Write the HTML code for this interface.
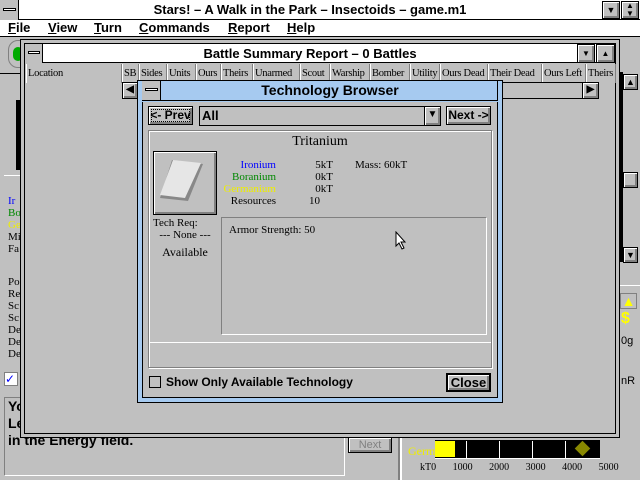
<!DOCTYPE html>
<html><head><style>
*{margin:0;padding:0;box-sizing:border-box}
body{width:640px;height:480px;overflow:hidden;background:#c0c0c0;position:relative;font-family:"Liberation Sans",sans-serif;font-size:13px}
.a{position:absolute;white-space:nowrap}
.btn{position:absolute;background:#c0c0c0;border:1px solid #000;box-shadow:inset 1px 1px 0 #fff,inset -2px -2px 0 #808080;text-align:center;font-weight:bold;white-space:nowrap;overflow:hidden}
.serif{font-family:"Liberation Serif",serif;font-size:12px}
.hd{position:absolute;top:0;height:19px;border-right:1px solid #808080;border-left:1px solid #fff;font-family:"Liberation Serif",serif;font-size:10.5px;letter-spacing:-0.3px;line-height:19px;padding-left:1px;white-space:nowrap;overflow:hidden}
</style></head><body>
<!-- main title -->
<div class="a" style="left:0;top:0;width:640px;height:20px;background:#fff;border-bottom:1px solid #000"></div>
<div class="a" style="left:0;top:0;width:19px;height:20px;background:#c0c0c0;border-right:1px solid #000"><div class="a" style="left:3px;top:8px;width:13px;height:3px;background:#fff;border:1px solid #000"></div></div>
<div class="a" style="left:20px;top:0;width:580px;height:20px;text-align:center;line-height:20px;font-size:13px;font-weight:bold">Stars! – A Walk in the Park – Insectoids – game.m1</div>
<div class="btn" style="left:602px;top:1px;width:18px;height:18px;font-size:9px;line-height:16px">▼</div>
<div class="btn" style="left:621px;top:1px;width:18px;height:18px;font-size:8px;line-height:8px">▲<br>▼</div>
<!-- menu -->
<div class="a" style="left:0;top:20px;width:640px;height:17px;background:#fff;border-bottom:1px solid #000;font-size:13px;font-weight:bold;line-height:16px">
<span class="a" style="left:8px"><u>F</u>ile</span><span class="a" style="left:48px"><u>V</u>iew</span><span class="a" style="left:94px"><u>T</u>urn</span><span class="a" style="left:139px"><u>C</u>ommands</span><span class="a" style="left:228px"><u>R</u>eport</span><span class="a" style="left:287px"><u>H</u>elp</span></div>
<!-- left background bits -->
<div class="a" style="left:8px;top:40px;width:14px;height:28px;border:1px solid #808080;border-radius:10px 0 0 10px;background:#c0c0c0"><div class="a" style="left:4px;top:6px;width:10px;height:14px;background:#0a0;border-radius:5px"></div></div>
<div class="a" style="left:0;top:73px;width:20px;height:1px;background:#000"></div>
<div class="a" style="left:16px;top:100px;width:4px;height:70px;background:#000"></div>
<div class="a" style="left:4px;top:175px;width:16px;height:1px;background:#fff"></div>
<div class="a serif" style="left:8px;top:195px;line-height:12px;font-size:11px"><span style="color:#00f">Ir</span><br><span style="color:#080">Bo</span><br><span style="color:#ee0">Ge</span><br>Mi<br>Fa</div>
<div class="a serif" style="left:8px;top:276px;line-height:12px;font-size:11px">Po<br>Re<br>Sc<br>Sc<br>De<br>De<br>De</div>
<div class="a" style="left:4px;top:372px;width:14px;height:14px;background:#fff;border:1px solid #808080;color:#00f;font-size:12px;line-height:12px">✓</div>
<!-- bottom message pane -->
<div class="a" style="left:4px;top:397px;width:341px;height:79px;border:1px solid #808080;border-right-color:#fff;border-bottom-color:#fff"></div>
<div class="a" style="left:8px;top:398px;font-weight:bold;font-size:14px;line-height:17px">Yo<br>Le<br>in the Energy field.</div>
<div class="btn" style="left:348px;top:437px;width:44px;height:16px;font-weight:normal;color:#808080;font-size:11px;line-height:14px">Next</div>
<div class="a" style="left:398px;top:437px;width:2px;height:43px;background:#808080"></div>
<div class="a" style="left:400px;top:437px;width:2px;height:43px;background:#fff"></div>
<div class="a serif" style="left:408px;top:444px;color:#ee0;font-size:12px">Germ</div>
<div class="a" style="left:435px;top:440px;width:165px;height:19px;background:#000;border-bottom:1px solid #fff"></div>
<div class="a" style="left:435px;top:441px;width:20px;height:16px;background:#ff0"></div>
<div class="a" style="left:466px;top:441px;width:1px;height:17px;background:#fff"></div>
<div class="a" style="left:499px;top:441px;width:1px;height:17px;background:#fff"></div>
<div class="a" style="left:532px;top:441px;width:1px;height:17px;background:#fff"></div>
<div class="a" style="left:565px;top:441px;width:1px;height:17px;background:#fff"></div>
<div class="a" style="left:577px;top:443px;width:11px;height:11px;background:#880;transform:rotate(45deg)"></div>
<div class="a serif" style="left:420px;top:462px;font-size:10px;word-spacing:14px">kT0 1000 2000 3000 4000 5000</div>
<!-- right edge bits -->
<div class="a" style="left:620px;top:72px;width:3px;height:190px;background:#000"></div>
<div class="btn" style="left:623px;top:74px;width:15px;height:16px;font-size:9px;line-height:14px">▲</div>
<div class="btn" style="left:623px;top:172px;width:15px;height:16px"></div>
<div class="btn" style="left:623px;top:247px;width:15px;height:16px;font-size:9px;line-height:14px">▼</div>
<div class="a" style="left:620px;top:285px;width:20px;height:1px;background:#fff"></div>
<div class="a" style="left:620px;top:293px;width:17px;height:16px;border:1px solid #808080;color:#ff0;font-size:14px;line-height:14px;text-align:center">▲</div>
<div class="a" style="left:621px;top:310px;color:#ff0;font-weight:bold;font-size:16px">$</div>
<div class="a" style="left:621px;top:335px;font-size:11px">0g</div>
<div class="a" style="left:621px;top:375px;font-size:11px">nR</div>
<!-- battle summary window -->
<div class="a" style="left:20px;top:39px;width:600px;height:399px;background:#c0c0c0;border:1px solid #000"></div>
<div class="a" style="left:24px;top:43px;width:592px;height:391px;border:1px solid #000"></div>
<div class="a" style="left:25px;top:44px;width:590px;height:19px;background:#fff;border-bottom:1px solid #000"></div>
<div class="a" style="left:25px;top:44px;width:18px;height:19px;background:#c0c0c0;border-right:1px solid #000"><div class="a" style="left:3px;top:7px;width:12px;height:3px;background:#fff;border:1px solid #000"></div></div>
<div class="a" style="left:44px;top:44px;width:532px;height:19px;text-align:center;line-height:19px;font-size:13px;font-weight:bold">Battle Summary Report – 0 Battles</div>
<div class="btn" style="left:577px;top:44px;width:18px;height:19px;font-size:8px;line-height:17px">▼</div>
<div class="btn" style="left:596px;top:44px;width:19px;height:19px;font-size:8px;line-height:17px">▲</div>
<div class="a" style="left:26px;top:64px;width:590px;height:19px">
<div class="hd" style="left:0;width:96px">Location</div><div class="hd" style="left:96px;width:17px">SB</div><div class="hd" style="left:113px;width:28px">Sides</div><div class="hd" style="left:141px;width:29px">Units</div><div class="hd" style="left:170px;width:25px">Ours</div><div class="hd" style="left:195px;width:32px">Theirs</div><div class="hd" style="left:227px;width:47px">Unarmed</div><div class="hd" style="left:274px;width:30px">Scout</div><div class="hd" style="left:304px;width:40px">Warship</div><div class="hd" style="left:344px;width:40px">Bomber</div><div class="hd" style="left:384px;width:30px">Utility</div><div class="hd" style="left:414px;width:48px">Ours Dead</div><div class="hd" style="left:462px;width:54px">Their Dead</div><div class="hd" style="left:516px;width:44px">Ours Left</div><div class="hd" style="left:560px;width:30px">Theirs</div></div>
<div class="a" style="left:122px;top:82px;width:477px;height:17px;border:1px solid #000;background:#c0c0c0"></div>
<div class="btn" style="left:122px;top:82px;width:16px;height:17px;font-size:10px;line-height:14px">◀</div>
<div class="btn" style="left:582px;top:82px;width:17px;height:17px;font-size:10px;line-height:14px">▶</div>
<!-- tech browser -->
<div class="a" style="left:137px;top:80px;width:366px;height:323px;background:#a6caf0;border:1px solid #000"></div>
<div class="a" style="left:142px;top:80px;width:356px;height:21px;border-bottom:1px solid #000;border-left:1px solid #000;border-right:1px solid #000"></div>
<div class="a" style="left:142px;top:81px;width:19px;height:19px;background:#c0c0c0;border-right:1px solid #000"><div class="a" style="left:3px;top:7px;width:13px;height:3px;background:#fff;border:1px solid #000"></div></div>
<div class="a" style="left:162px;top:81px;width:336px;height:19px;text-align:center;line-height:19px;font-size:14px;font-weight:bold">Technology Browser</div>
<div class="a" style="left:142px;top:102px;width:356px;height:296px;background:#c0c0c0;border:1px solid #000;border-top:none"></div>
<div class="btn" style="left:148px;top:106px;width:45px;height:19px;line-height:17px;font-size:12px;outline:1px dotted #000;outline-offset:-4px">&lt;- Prev</div>
<div class="a" style="left:199px;top:106px;width:242px;height:20px;border:1px solid #000;background:#c0c0c0"></div>
<div class="a" style="left:202px;top:107px;font-weight:bold;line-height:18px">All</div>
<div class="btn" style="left:424px;top:107px;width:16px;height:18px;font-size:10px;line-height:15px;border:none;border-left:1px solid #000">▼</div>
<div class="btn" style="left:446px;top:106px;width:45px;height:19px;line-height:17px;font-size:12px">Next -&gt;</div>
<div class="a" style="left:148px;top:130px;width:344px;height:238px;border:1px solid #808080;box-shadow:1px 1px 0 #fff,inset 1px 1px 0 #fff"></div>
<div class="a" style="left:148px;top:134px;width:344px;text-align:center;font-family:'Liberation Serif',serif;font-size:14px">Tritanium</div>
<div class="btn" style="left:153px;top:151px;width:64px;height:64px"></div>
<svg class="a" style="left:160px;top:158px" width="50" height="50"><polygon points="12,2 43,6 28,43 0,40" fill="#888"/><polygon points="13,2 41,5 25,40 0,37" fill="#e6e6e6"/></svg>
<div class="a serif" style="left:220px;top:159px;width:56px;text-align:right;line-height:12px;font-size:11px"><span style="color:#00f">Ironium</span><br><span style="color:#080">Boranium</span><br><span style="color:#ee0">Germanium</span><br>Resources</div>
<div class="a serif" style="left:300px;top:159px;width:33px;text-align:right;line-height:12px;font-size:11px">5kT<br>0kT<br>0kT</div>
<div class="a serif" style="left:309px;top:195px;font-size:11px">10</div>
<div class="a serif" style="left:355px;top:159px;font-size:11px">Mass: 60kT</div>
<div class="a serif" style="left:153px;top:217px;font-size:11px;line-height:12px">Tech Req:</div>
<div class="a serif" style="left:153px;top:229px;width:64px;text-align:center;font-size:11px">--- None ---</div>
<div class="a serif" style="left:153px;top:245px;width:64px;text-align:center;font-size:12px">Available</div>
<div class="a" style="left:221px;top:217px;width:266px;height:118px;border:1px solid #808080;border-right-color:#fff;border-bottom-color:#fff"></div>
<div class="a serif" style="left:229px;top:224px;font-size:11px">Armor Strength: 50</div>
<svg class="a" style="left:395px;top:231px" width="12" height="20"><path d="M1,1 L1,15 L4,12 L7,18 L9,17 L6,11 L10,11 Z" fill="#fff" stroke="#000"/></svg>
<div class="a" style="left:149px;top:342px;width:342px;height:1px;background:#fff"></div>
<div class="a" style="left:149px;top:376px;width:12px;height:12px;border:1px solid #000;background:#c0c0c0"></div>
<div class="a" style="left:166px;top:375px;font-size:12px;font-weight:bold">Show Only Available Technology</div>
<div class="btn" style="left:446px;top:373px;width:45px;height:19px;line-height:16px;border-width:2px">Close</div>
</body></html>
